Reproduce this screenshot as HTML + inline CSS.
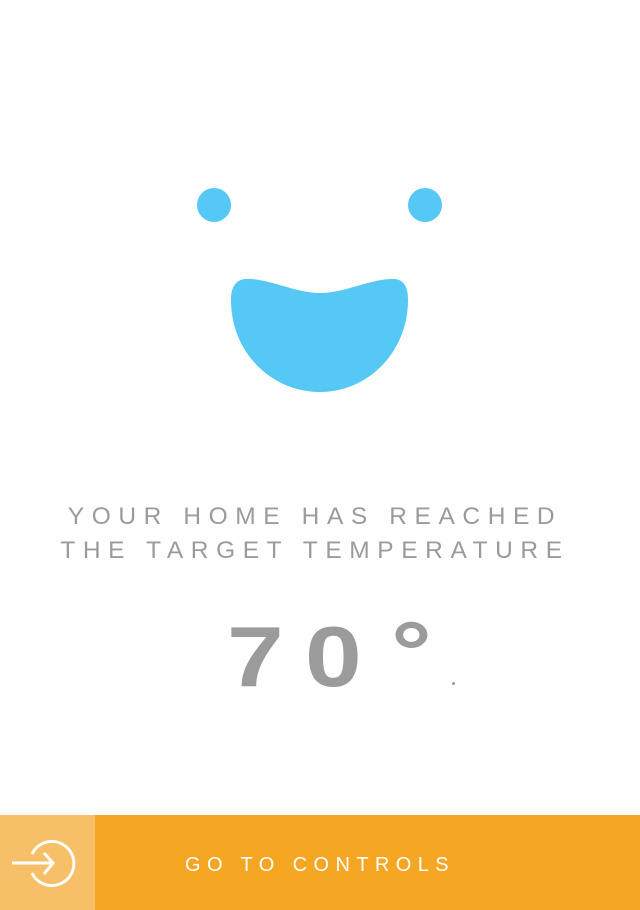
<!DOCTYPE html>
<html><head><meta charset="utf-8"><style>
html,body{margin:0;padding:0;background:#fff;width:640px;height:910px;overflow:hidden;position:relative;font-family:"Liberation Sans",sans-serif}
.t{position:absolute;left:-5px;width:640px;text-align:center;color:#9b9b9b;font-size:24.5px;letter-spacing:7.6px;white-space:nowrap}
.g{position:absolute;color:#9b9b9b;font-weight:bold;font-size:85px;line-height:85px;top:615px;transform:scaleX(1.2);transform-origin:left top}
.bar{position:absolute;top:815px;left:0;width:640px;height:95px;background:#f5a623}
.sq{position:absolute;top:0;left:0;width:95px;height:95px;background:#f7c068}
.bt{position:absolute;left:185px;top:38px;color:#fff;font-size:20px;letter-spacing:6.4px;line-height:24px;white-space:nowrap}
</style></head><body>
<svg width="640" height="420" style="position:absolute;left:0;top:0">
<circle cx="214" cy="205" r="17" fill="#55c8f6"/>
<circle cx="425" cy="205" r="17" fill="#55c8f6"/>
<path d="M231 300 C231 284 238 278 250 279 C272 280 296 293 320 293 C344 293 368 280 390 279 C402 278 408 284 408 300 C408 352 368 392 320 392 C271 392 231 352 231 300 Z" fill="#55c8f6"/>
</svg>
<div class="t" style="top:503px">YOUR HOME HAS REACHED</div>
<div class="t" style="top:537px">THE TARGET TEMPERATURE</div>
<div class="g" style="left:227px">7</div>
<div class="g" style="left:305px">0</div>
<div class="g" style="left:391px;top:610px">°</div>
<div style="position:absolute;left:452px;top:682px;width:3px;height:3px;border-radius:50%;background:#9b9b9b"></div>
<div class="bar"><div class="sq">
<svg width="95" height="95"><g fill="none" stroke="#fff" stroke-width="3">
<path d="M32 39 A22 22 0 1 1 32 58"/>
<path d="M12 48 H53 M44 38 L53 48 L44 59"/></g></svg>
</div><div class="bt">GO TO CONTROLS</div></div>
</body></html>
